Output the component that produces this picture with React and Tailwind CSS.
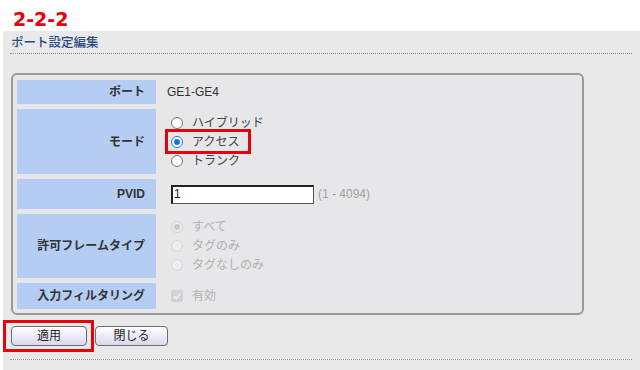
import React from "react";

const font = { fontFamily: '"Liberation Sans", "Noto Sans CJK JP", sans-serif' };

function Radio({ checked, disabled, label }) {
  return (
    <div className="flex items-center h-[19px]">
      <span
        className={
          "ml-[3px] w-[12px] h-[12px] rounded-full border flex items-center justify-center " +
          (disabled
            ? "border-[#d4d4d4] bg-[#ececec]"
            : checked
            ? "border-[#1a73e8] bg-white"
            : "border-[#707070] bg-white")
        }
      >
        {checked && (
          <span
            className={
              "w-[6px] h-[6px] rounded-full " + (disabled ? "bg-[#c8c8c8]" : "bg-[#1a73e8]")
            }
          />
        )}
      </span>
      <span
        className={
          "ml-[9px] text-[12px] leading-[14px] " + (disabled ? "text-[#b0b0b0]" : "text-[#444]")
        }
      >
        {label}
      </span>
    </div>
  );
}

function Row({ label, h, children }) {
  return (
    <div className="flex" style={{ height: h }}>
      <div className="w-[139px] shrink-0 bg-[#b5cdf2] flex items-center justify-end pr-[11px] text-[12px] font-bold text-[#333]">
        {label}
      </div>
      <div className="flex-1 flex flex-col justify-center pl-[12px]">{children}</div>
    </div>
  );
}

export default function App() {
  return (
    <div className="w-[640px] h-[370px] bg-white overflow-hidden relative" style={font}>
      <div
        className="h-[31px] pl-[13px] pt-[9px] text-[19px] leading-[20px] font-bold text-[#e8000b]"
        style={{ fontFamily: '"DejaVu Sans", sans-serif' }}
      >
        2-2-2
      </div>
      <div className="ml-[3px] h-[339px] bg-[#e9e9e9] pl-[7px] pr-[8px]">
        <div className="pt-[6px] pb-[4px] pl-[1px] text-[12.5px] leading-[12px] font-medium text-[#294b83] border-b border-dotted border-[#8593b3]">
          ポート設定編集
        </div>
        <div className="mt-[19px] ml-[1px] w-[573px] border-2 border-[#999] rounded-[6px] bg-[#e7e7e9] pt-[5px] pb-[4px] pl-[4px] pr-[4px] flex flex-col gap-[5px]">
          <Row label="ポート" h={24}>
            <span className="text-[12px] text-[#333] -ml-[1px]">GE1-GE4</span>
          </Row>
          <Row label="モード" h={65}>
            <Radio label="ハイブリッド" />
            <Radio label="アクセス" checked />
            <Radio label="トランク" />
          </Row>
          <Row label="PVID" h={30}>
            <div className="flex items-center">
              <div className="ml-[3px] w-[143px] h-[19px] bg-white border border-[#555] border-t-2 border-l-2 border-t-[#222] border-l-[#222] text-[12px] leading-[15px] text-[#222] pl-[1px]">
                1
              </div>
              <span className="ml-[4px] text-[12px] text-[#a0a0a0]">(1 - 4094)</span>
            </div>
          </Row>
          <Row label="許可フレームタイプ" h={64}>
            <Radio label="すべて" checked disabled />
            <Radio label="タグのみ" disabled />
            <Radio label="タグなしのみ" disabled />
          </Row>
          <Row label="入力フィルタリング" h={26}>
            <div className="flex items-center">
              <span className="ml-[3px] w-[12px] h-[12px] rounded-[2px] bg-[#d2d2d2] flex items-center justify-center">
                <svg width="10" height="10" viewBox="0 0 10 10">
                  <path d="M2 5.2 L4.2 7.4 L8.2 2.8" fill="none" stroke="#f4f4f4" strokeWidth="1.6" />
                </svg>
              </span>
              <span className="ml-[9px] text-[12px] text-[#b0b0b0]">有効</span>
            </div>
          </Row>
        </div>
        <div className="mt-[11px] ml-[1px] flex gap-[8px]">
          <button className="w-[76px] h-[20px] border border-[#6c6c6c] rounded-[4px] bg-gradient-to-b from-white to-[#d8d8f0] text-[12px] leading-[18px] text-[#222]">
            適用
          </button>
          <button className="w-[73px] h-[20px] border border-[#6c6c6c] rounded-[4px] bg-gradient-to-b from-white to-[#d8d8f0] text-[12px] leading-[18px] text-[#222]">
            閉じる
          </button>
        </div>
        <div className="mt-[13px] border-b border-dotted border-[#8593b3]" />
      </div>
      <div className="absolute left-[165px] top-[129px] w-[86px] h-[25px] border-[3px] border-[#e8000b]" />
      <div className="absolute left-[3px] top-[320px] w-[91px] h-[32px] border-[3px] border-[#e8000b]" />
    </div>
  );
}
